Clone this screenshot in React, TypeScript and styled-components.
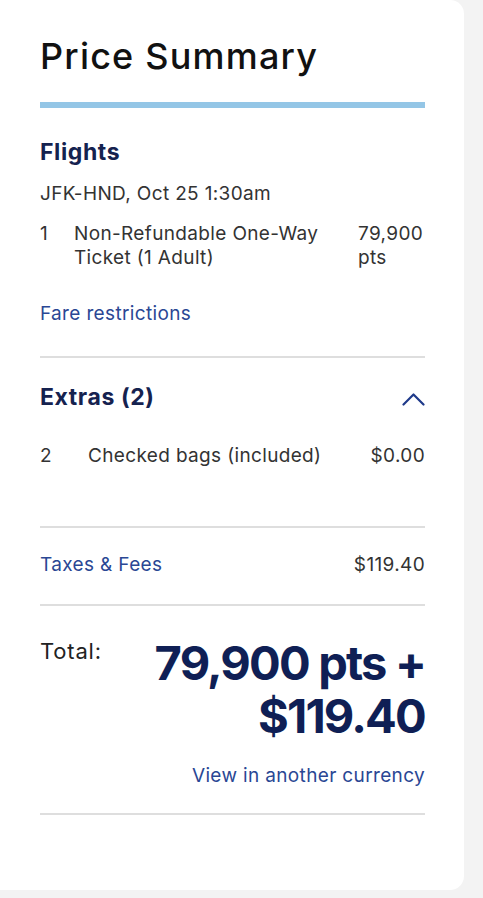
import React from 'react';
import styled, { createGlobalStyle } from 'styled-components';

const GlobalStyle = createGlobalStyle`
  html, body {
    margin: 0;
    padding: 0;
    background: #f3f3f3;
  }
  body {
    font-family: Inter, 'Noto Sans', sans-serif;
    color: #333333;
  }
`;

const Card = styled.div`
  width: 464px;
  min-height: 890px;
  box-sizing: border-box;
  background: #ffffff;
  border-radius: 0 14px 14px 0;
  padding: 34px 39px 40px 40px;
`;

const Title = styled.h1`
  margin: 0;
  font-size: 36px;
  font-weight: 500;
  color: #111111;
  line-height: 44px;
  letter-spacing: 1.2px;
`;

const TitleBar = styled.div`
  height: 6px;
  background: #94c6e6;
  margin-top: 24px;
`;

const Section = styled.section<{ $pad?: string }>`
  padding: ${(p) => p.$pad || '0'};
  border-bottom: 2px solid #dedede;
`;

const SectionHead = styled.div`
  display: flex;
  align-items: center;
  justify-content: space-between;
`;

const Heading = styled.h2`
  margin: 0;
  font-size: 23px;
  font-weight: 700;
  color: #15224f;
  line-height: 30px;
  letter-spacing: 0.6px;
`;

const Body = styled.div<{ $top?: number }>`
  margin-top: ${(p) => p.$top || 0}px;
  font-size: 19px;
  line-height: 24px;
  letter-spacing: 0.35px;
`;

const Row = styled(Body)<{ $qty: number; $price?: string }>`
  display: grid;
  grid-template-columns: ${(p) => p.$qty}px 1fr ${(p) => p.$price || 'auto'};
  column-gap: 8px;
`;

const Price = styled.div`
  text-align: right;
`;

const Link = styled.a`
  color: #2a4794;
  text-decoration: none;
  cursor: pointer;
`;

const LineItem = styled(Body)`
  display: flex;
  justify-content: space-between;
`;

const TotalRow = styled.div`
  display: flex;
  justify-content: space-between;
  align-items: flex-start;
`;

const TotalLabel = styled.div`
  font-size: 22px;
  line-height: 28px;
  letter-spacing: 0.8px;
  color: #222222;
  margin-top: 1px;
`;

const TotalRight = styled.div`
  display: flex;
  flex-direction: column;
  align-items: flex-end;
`;

const AmountLine = styled.div`
  font-size: 47px;
  font-weight: 700;
  color: #0f1f55;
  line-height: 53px;
  letter-spacing: -1.8px;
  text-align: right;
`;

const ChevronButton = styled.button`
  border: 0;
  background: none;
  padding: 0;
  margin-top: 4px;
  display: flex;
  cursor: pointer;
`;

const ChevronUp = () => (
  <svg width="23" height="14" viewBox="0 0 23 14" fill="none">
    <path d="M1.5 12.5 L11.5 2.5 L21.5 12.5" stroke="#1f3a8a" strokeWidth="2.2" strokeLinecap="round" strokeLinejoin="round" />
  </svg>
);

const App = () => {
  return (
    <>
      <GlobalStyle />
      <Card>
        <Title>Price Summary</Title>
        <TitleBar />

        <Section $pad="29px 0 30px">
          <Heading>Flights</Heading>
          <Body $top={15}>JFK-HND, Oct 25 1:30am</Body>
          <Row $top={16} $qty={26} $price="67px">
            <div>1</div>
            <div>Non-Refundable One-Way Ticket (1 Adult)</div>
            <div>79,900 pts</div>
          </Row>
          <Body $top={32}>
            <Link>Fare restrictions</Link>
          </Body>
        </Section>

        <Section $pad="24px 0 58px">
          <SectionHead>
            <Heading>Extras (2)</Heading>
            <ChevronButton aria-label="Collapse extras">
              <ChevronUp />
            </ChevronButton>
          </SectionHead>
          <Row $top={32} $qty={40}>
            <div>2</div>
            <div>Checked bags (included)</div>
            <Price>$0.00</Price>
          </Row>
        </Section>

        <Section $pad="25px 0 27px">
          <LineItem>
            <Link>Taxes &amp; Fees</Link>
            <span>$119.40</span>
          </LineItem>
        </Section>

        <Section $pad="30px 0 25px">
          <TotalRow>
            <TotalLabel>Total:</TotalLabel>
            <TotalRight>
              <AmountLine>79,900 pts +</AmountLine>
              <AmountLine>$119.40</AmountLine>
              <Body $top={22}>
                <Link>View in another currency</Link>
              </Body>
            </TotalRight>
          </TotalRow>
        </Section>
      </Card>
    </>
  );
};

export default App;
